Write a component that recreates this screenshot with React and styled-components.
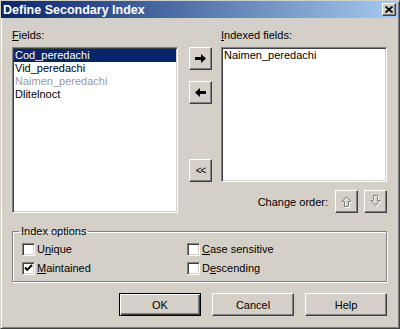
import React from 'react'
import styled, { createGlobalStyle } from 'styled-components'

const GlobalStyle = createGlobalStyle`
  html, body {
    margin: 0;
    padding: 0;
    background: #d4d0c8;
  }
  body {
    font-family: "Liberation Sans", Arial, sans-serif;
    font-size: 11px;
    color: #000;
  }
`

const raised = `
  border: 1px solid;
  border-color: #fff #404040 #404040 #fff;
  box-shadow: inset -1px -1px 0 #808080, inset 1px 1px 0 #d4d0c8;
`

const sunken = `
  border: 1px solid;
  border-color: #808080 #fff #fff #808080;
  box-shadow: inset 1px 1px 0 #404040, inset -1px -1px 0 #d4d0c8;
`

const Window = styled.div`
  width: 400px;
  height: 329px;
  box-sizing: border-box;
  background: #d4d0c8;
  border: 1px solid;
  border-color: #d4d0c8 #404040 #404040 #d4d0c8;
  box-shadow: inset 1px 1px 0 #fff, inset -1px -1px 0 #808080;
  display: flex;
  flex-direction: column;
`

const TitleBar = styled.div`
  height: 17px;
  margin-right: 1px;
  display: flex;
  align-items: center;
  justify-content: space-between;
  padding: 0 2px 0 2px;
  background: linear-gradient(to right, #0a246a, #a6caf0);
  color: #fff;
  font-weight: bold;
  font-size: 12.5px;
`

const CloseButton = styled.div`
  width: 14px;
  height: 13px;
  box-sizing: border-box;
  background: #d4d0c8;
  ${raised}
  display: flex;
  align-items: center;
  justify-content: center;
`

const Body = styled.div`
  padding: 11px 12px 0 11px;
  display: flex;
  flex-direction: column;
`

const Main = styled.div`
  display: flex;
`

const Column = styled.div`
  display: flex;
  flex-direction: column;
  width: 166px;
`

const Label = styled.div`
  height: 13px;
  line-height: 13px;
  margin-bottom: 5px;
  white-space: nowrap;
`

const U = styled.span`
  text-decoration: underline;
`

const ListBox = styled.div`
  box-sizing: border-box;
  height: ${p => p.$h}px;
  background: #fff;
  ${sunken}
  padding: 1px;
`

const Item = styled.div`
  height: 13px;
  line-height: 13px;
  padding-left: 1px;
  white-space: nowrap;
  background: ${p => (p.$selected ? '#0a246a' : 'transparent')};
  color: ${p => (p.$selected ? '#fff' : p.$disabled ? '#9a9a9a' : '#000')};
`

const MidColumn = styled.div`
  display: flex;
  flex-direction: column;
  padding-top: 18px;
  margin: 0 9px 0 11px;
`

const ToolButton = styled.div`
  width: 23px;
  height: 23px;
  box-sizing: border-box;
  ${raised}
  display: flex;
  align-items: center;
  justify-content: center;
  margin-top: ${p => p.$gap || 0}px;
  font-size: 10px;
  letter-spacing: -1px;
`

const OrderRow = styled.div`
  display: flex;
  align-items: center;
  justify-content: flex-end;
  margin-top: 8px;
  gap: 6px;
`

const OrderLabel = styled.span`
  margin-right: 1px;
`

const Group = styled.fieldset`
  margin: 12px 0 0 0;
  padding: 0 6px 6px 6px;
  border: 1px solid #808080;
  box-shadow: inset 1px 1px 0 #fff, 1px 1px 0 #fff;
`

const Legend = styled.legend`
  padding: 0 2px;
  line-height: 13px;
  height: 13px;
`

const Options = styled.div`
  display: grid;
  grid-template-columns: 165px 1fr;
  row-gap: 6px;
  margin: 5px 0 0 3px;
`

const Option = styled.label`
  display: flex;
  align-items: center;
  gap: 2px;
  height: 13px;
  line-height: 13px;
`

const Box = styled.span`
  width: 13px;
  height: 13px;
  box-sizing: border-box;
  background: #fff;
  ${sunken}
  display: flex;
  align-items: center;
  justify-content: center;
`

const Footer = styled.div`
  display: flex;
  justify-content: flex-end;
  gap: 11px;
  margin-top: 11px;
`

const Button = styled.div`
  width: 82px;
  height: 23px;
  box-sizing: border-box;
  display: flex;
  align-items: center;
  justify-content: center;
  border: 1px solid;
  border-color: ${p => (p.$default ? '#000' : '#fff #404040 #404040 #fff')};
  box-shadow: ${p =>
    p.$default
      ? 'inset 1px 1px 0 #fff, inset -1px -1px 0 #404040, inset -2px -2px 0 #808080'
      : 'inset -1px -1px 0 #808080, inset 1px 1px 0 #d4d0c8'};
`

const ArrowRight = () => (
  <svg width="11" height="9" viewBox="0 0 11 9">
    <path d="M0 3h6V0l5 4.5L6 9V6H0z" fill="#000" />
  </svg>
)

const ArrowLeft = () => (
  <svg width="11" height="9" viewBox="0 0 11 9">
    <path d="M11 3H5V0L0 4.5 5 9V6h6z" fill="#000" />
  </svg>
)

const GrayUp = () => (
  <svg width="12" height="13" viewBox="0 0 12 13">
    <path d="M6.5 2.5l4.5 5H8.5v5h-4v-5H2z" fill="none" stroke="#fff" />
    <path d="M5.5 1.5l4.5 5H7.5v5h-4v-5H1z" fill="none" stroke="#808080" />
  </svg>
)

const GrayDown = () => (
  <svg width="12" height="13" viewBox="0 0 12 13">
    <path d="M6.5 11.5l4.5-5H8.5v-5h-4v5H2z" fill="none" stroke="#fff" />
    <path d="M5.5 10.5l4.5-5H7.5v-5h-4v5H1z" fill="none" stroke="#808080" />
  </svg>
)

const CloseX = () => (
  <svg width="8" height="7" viewBox="0 0 8 7">
    <path d="M0.5 0.5l7 6M7.5 0.5l-7 6" stroke="#000" strokeWidth="1.8" />
  </svg>
)

const Check = () => (
  <svg width="9" height="9" viewBox="0 0 9 9">
    <path d="M1 3.5l2.2 2.3L8 1" fill="none" stroke="#000" strokeWidth="1.9" />
  </svg>
)

const CheckOption = ({ checked, children }) => (
  <Option>
    <Box>{checked && <Check />}</Box>
    <span>{children}</span>
  </Option>
)

export default function App() {
  return (
    <Window>
      <GlobalStyle />
      <TitleBar>
        <span>Define Secondary Index</span>
        <CloseButton>
          <CloseX />
        </CloseButton>
      </TitleBar>
      <Body>
        <Main>
          <Column>
            <Label>
              <U>F</U>ields:
            </Label>
            <ListBox $h={166}>
              <Item $selected>Cod_peredachi</Item>
              <Item>Vid_peredachi</Item>
              <Item $disabled>Naimen_peredachi</Item>
              <Item>Dlitelnoct</Item>
            </ListBox>
          </Column>
          <MidColumn>
            <ToolButton>
              <ArrowRight />
            </ToolButton>
            <ToolButton $gap={11}>
              <ArrowLeft />
            </ToolButton>
            <ToolButton $gap={55}>&lt;&lt;</ToolButton>
          </MidColumn>
          <Column>
            <Label>
              <U>I</U>ndexed fields:
            </Label>
            <ListBox $h={135}>
              <Item>Naimen_peredachi</Item>
            </ListBox>
            <OrderRow>
              <OrderLabel>Change order:</OrderLabel>
              <ToolButton>
                <GrayUp />
              </ToolButton>
              <ToolButton>
                <GrayDown />
              </ToolButton>
            </OrderRow>
          </Column>
        </Main>
        <Group>
          <Legend>Index options</Legend>
          <Options>
            <CheckOption>
              U<U>n</U>ique
            </CheckOption>
            <CheckOption>
              <U>C</U>ase sensitive
            </CheckOption>
            <CheckOption checked>
              <U>M</U>aintained
            </CheckOption>
            <CheckOption>
              D<U>e</U>scending
            </CheckOption>
          </Options>
        </Group>
        <Footer>
          <Button $default>OK</Button>
          <Button>Cancel</Button>
          <Button>Help</Button>
        </Footer>
      </Body>
    </Window>
  )
}
